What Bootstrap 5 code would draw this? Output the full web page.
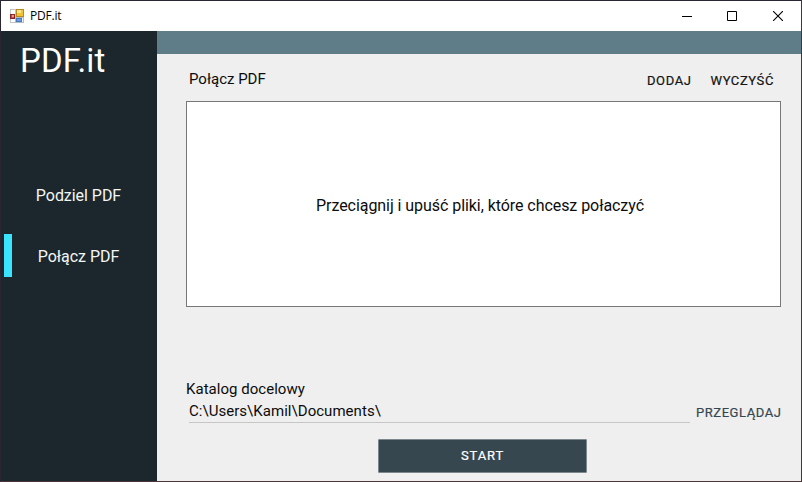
<!DOCTYPE html>
<html lang="pl">
<head>
<meta charset="utf-8">
<meta name="viewport" content="width=device-width, initial-scale=1">
<title>PDF.it</title>
<link href="https://cdn.jsdelivr.net/npm/bootstrap@5.3.0/dist/css/bootstrap.min.css" rel="stylesheet">
<style>
body{font-family:Roboto,sans-serif;color:#0c0c0c;line-height:20px;font-size:16px}
.win{width:802px;height:482px;border:1px solid #2b2633;border-right-color:#46333c;border-bottom-color:#4b3537;background:#efefef}
.titlebar{height:30px;padding-left:9px}
.win-title{font:12px/16px "Open Sans","Noto Sans",sans-serif;color:#000;letter-spacing:-.2px;margin-left:6px}
.win-btn{width:46px;height:30px}
.side{width:156px;background:#1b272c;color:#f4f6f6}
.brand{font-size:33px;line-height:38px;padding:11px 0 0 19px;color:#fff;margin-bottom:93px;letter-spacing:.15px}
.side-item{height:43px;margin-bottom:18px;padding-left:3px}
.side-item .marker{width:8px;height:43px}
.side-item.active .marker{background:#3ae3ff}
.side-item .txt{width:133px;padding-top:3px;letter-spacing:-.04px}
.strip{height:23px;background:#5f7d89}
.content{padding:0 20px 0 29px}
.tools{height:47px;padding:3px 7px 0 3px}
.t15{font-size:15px}
.flat{font-size:13px;font-weight:400;letter-spacing:.6px;line-height:20px;border:0;background:none;padding:0;color:#141414;-webkit-text-stroke:.2px currentColor}
.tools .flat{margin-top:3px}
.clear{margin-left:19px}
.drop{height:206px;border:1px solid #777;background:#fff;padding:3px 7px 0 0}
.hint{letter-spacing:-.06px}
.target{margin-top:72px;letter-spacing:.03px}
.path-line{width:501px;height:24px;padding-top:2px;border-bottom:1px solid #c6c6c6;margin-left:3px;letter-spacing:.04px}
.flat.browse{color:#37474f;margin:4px 0 0 6px;letter-spacing:.55px}
.start{width:209px;height:34px;margin:16px 0 0 192px;background:#37474f;color:#fff;border:1px solid #7c888e;border-radius:1px;font-size:13px;font-weight:400;-webkit-text-stroke:.2px currentColor;letter-spacing:.9px;line-height:32px}
</style>
</head>
<body class="m-0 overflow-hidden">
<div class="win d-flex flex-column">
  <header class="titlebar bg-white d-flex align-items-center flex-shrink-0">
    <svg width="14" height="14" viewBox="0 0 14 14" shape-rendering="crispEdges" aria-hidden="true">
      <path fill="#fff" stroke="#c4c4c4" d="M.5.5h5v13h-5z"/>
      <path fill="#f3f5f8" stroke="#b3bac5" d="M5.500 8.500h8v5h-8z"/>
      <path fill="#f4c430" stroke="#b58a1e" d="M6.500.5h7v7h-7z"/>
      <path fill="#ffe58a" d="M7 1h4v3H7z"/>
      <path fill="#c84a43" stroke="#8b2626" d="M.5 5.500h4v4h-4z"/>
      <path fill="#e59a94" d="M2 6h2v2H2z"/>
      <path fill="#6f9ce0" stroke="#4878bd" d="M6.500 9.500h5v3h-5z"/>
    </svg>
    <span class="win-title">PDF.it</span>
    <div class="d-flex ms-auto">
      <div class="win-btn d-flex align-items-center justify-content-center"><svg width="12" height="10"><path d="M2 5.500h10" stroke="#000"/></svg></div>
      <div class="win-btn d-flex align-items-center justify-content-center"><svg width="10" height="10"><path d="M.5.5h9v9h-9z" fill="none" stroke="#000"/></svg></div>
      <div class="win-btn d-flex align-items-center justify-content-center"><svg width="10" height="10"><path d="M0 0l10 10M10 0L0 10" stroke="#000" stroke-width="1.100"/></svg></div>
    </div>
  </header>
  <div class="d-flex flex-grow-1">
    <nav class="side flex-shrink-0">
      <div class="brand">PDF.it</div>
      <div class="side-item d-flex align-items-center"><span class="marker"></span><span class="txt text-center">Podziel PDF</span></div>
      <div class="side-item active d-flex align-items-center"><span class="marker"></span><span class="txt text-center">Połącz PDF</span></div>
    </nav>
    <main class="flex-grow-1 overflow-hidden">
      <div class="strip"></div>
      <div class="content">
        <div class="tools d-flex align-items-center">
          <span class="t15">Połącz PDF</span>
          <button class="flat ms-auto">DODAJ</button>
          <button class="flat clear">WYCZYŚĆ</button>
        </div>
        <div class="drop d-flex align-items-center justify-content-center"><span class="hint">Przeciągnij i upuść pliki, które chcesz połaczyć</span></div>
        <div class="target t15">Katalog docelowy</div>
        <div class="d-flex">
          <div class="path-line t15 flex-shrink-0">C:\Users\Kamil\Documents\</div>
          <button class="flat browse text-nowrap">PRZEGLĄDAJ</button>
        </div>
        <button class="start d-block p-0">START</button>
      </div>
    </main>
  </div>
</div>
<script src="https://cdn.jsdelivr.net/npm/bootstrap@5.3.0/dist/js/bootstrap.bundle.min.js"></script>
</body>
</html>
